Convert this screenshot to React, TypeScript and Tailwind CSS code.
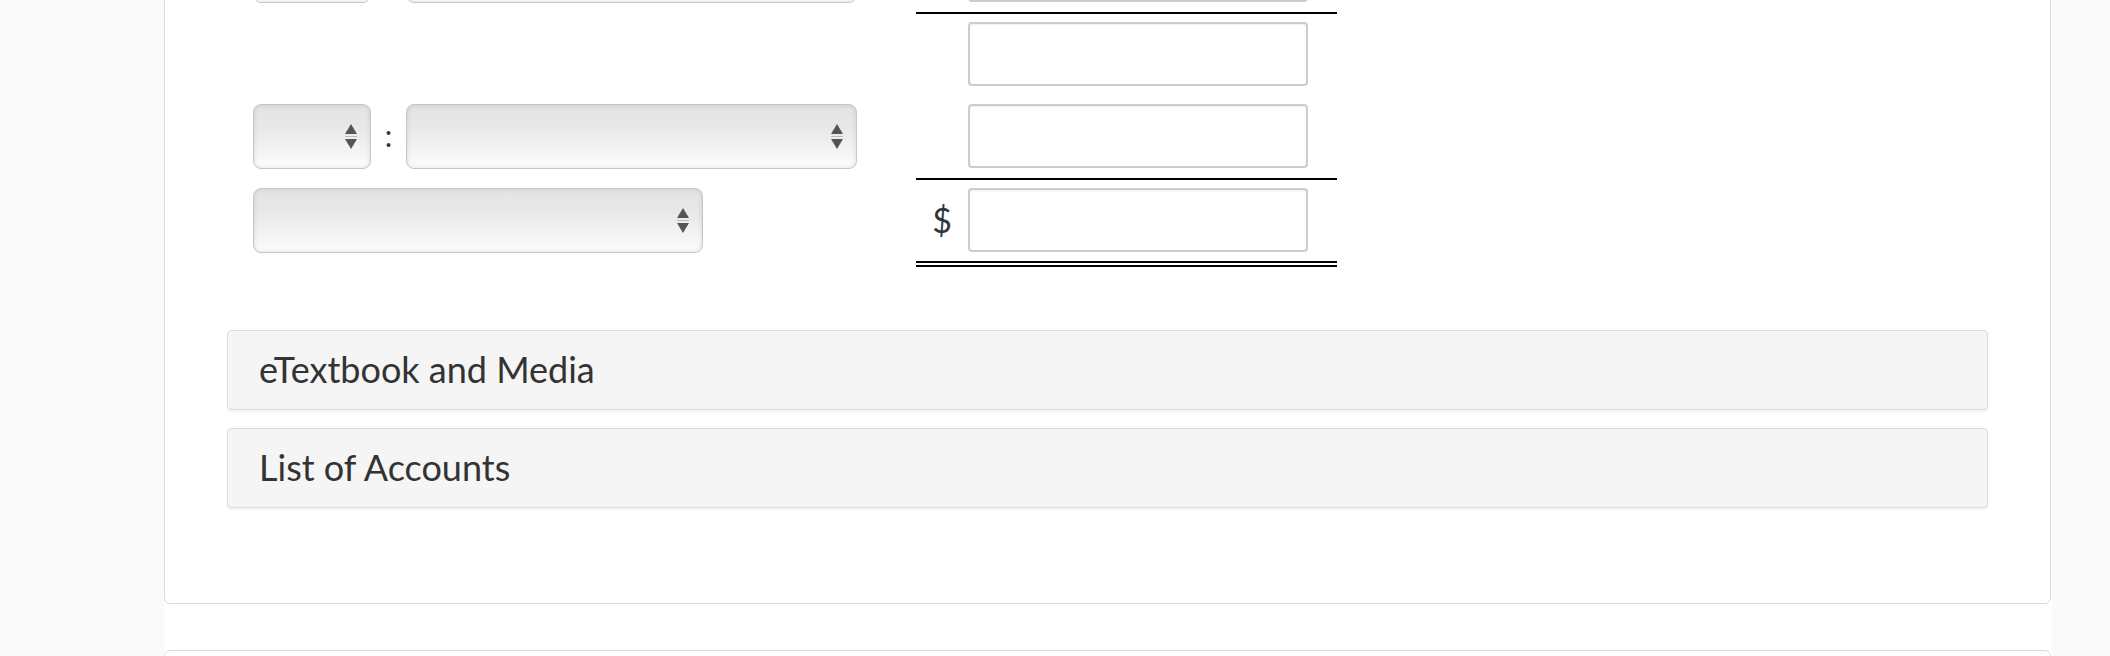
import React from "react";

const font = { fontFamily: "Lato, 'Open Sans', sans-serif" };

function Arrows() {
  return (
    <svg width="12" height="26" viewBox="0 0 12 26" className="shrink-0">
      <polygon points="6,0 12,10 0,10" fill="#555" />
      <rect x="0" y="12" width="12" height="1" fill="#bbb" />
      <polygon points="0,15 12,15 6,25" fill="#555" />
    </svg>
  );
}

function Select({ w }: { w: string }) {
  return (
    <div
      className={`${w} h-[65px] shrink-0 flex items-center justify-end pr-[13px] rounded-[8px] border border-[#c6c6c6] bg-[linear-gradient(180deg,#e3e3e3_0%,#e9e9e9_40%,#f5f5f5_78%,#fdfdfd_100%)] shadow-[inset_0_0_5px_rgba(0,0,0,0.12)]`}
    >
      <Arrows />
    </div>
  );
}

function Input() {
  return (
    <div className="w-[340px] h-[64px] shrink-0 rounded-[4px] border-2 border-[#cccccc] bg-white shadow-[inset_0_1px_2px_rgba(0,0,0,0.07)]" />
  );
}

function PairSelect() {
  return (
    <div className="flex items-center">
      <Select w="w-[118px]" />
      <span className="w-[35px] text-center text-[30px] leading-none text-[#333] -mt-[4px]">:</span>
      <Select w="w-[451px]" />
    </div>
  );
}

type Row = {
  left?: React.ReactNode;
  prefix?: string;
  cell: string;
  leftPad: string;
};

const rows: Row[] = [
  { left: <PairSelect />, cell: "pt-[8px] pb-[10px] border-b-2 border-black", leftPad: "pt-[8px]" },
  { cell: "pt-[8px] pb-[9px]", leftPad: "pt-[8px]" },
  { left: <PairSelect />, cell: "pt-[9px] pb-[10px] border-b-2 border-black", leftPad: "pt-[9px]" },
  {
    left: <Select w="w-[450px]" />,
    prefix: "$",
    cell: "pt-[8px] pb-[9px] border-b-[6px] border-double border-black",
    leftPad: "pt-[8px]",
  },
];

function Panel({ title }: { title: string }) {
  return (
    <div className="h-[80px] flex items-center pl-[31px] rounded-[4px] border border-[#dcdcdc] bg-[#f5f5f5] shadow-[0_2px_2px_rgba(0,0,0,0.05)]">
      <span className="text-[36px] leading-none text-[#333] -mt-[2px]">{title}</span>
    </div>
  );
}

export default function App() {
  return (
    <div className="h-[656px] overflow-hidden bg-[#fafafa]" style={font}>
      <div className="ml-[164px] w-[1888px] h-full flex flex-col bg-white">
        {/* Question card, its top scrolled out of view */}
        <div className="-mt-[120px] w-[1887px] shrink-0 rounded-[6px] border border-[#dcdcdc] bg-white px-[62px] pt-[49px] pb-[95px]">
          <div className="flex flex-col">
            {rows.map((r, i) => (
              <div key={i} className="flex items-start">
                <div className={`w-[689px] pl-[26px] ${r.leftPad}`}>{r.left}</div>
                <div className={`w-[421px] flex items-center ${r.cell}`}>
                  <span className="w-[52px] text-center text-[34px] leading-none text-[#2e3640]">
                    {r.prefix}
                  </span>
                  <Input />
                </div>
              </div>
            ))}
          </div>

          <div className="mt-[63px] flex flex-col gap-[18px]">
            <Panel title="eTextbook and Media" />
            <Panel title="List of Accounts" />
          </div>
        </div>

        {/* Next card */}
        <div className="mt-[46px] w-[1887px] h-[200px] shrink-0 rounded-[6px] border border-[#dcdcdc]" />
      </div>
    </div>
  );
}
